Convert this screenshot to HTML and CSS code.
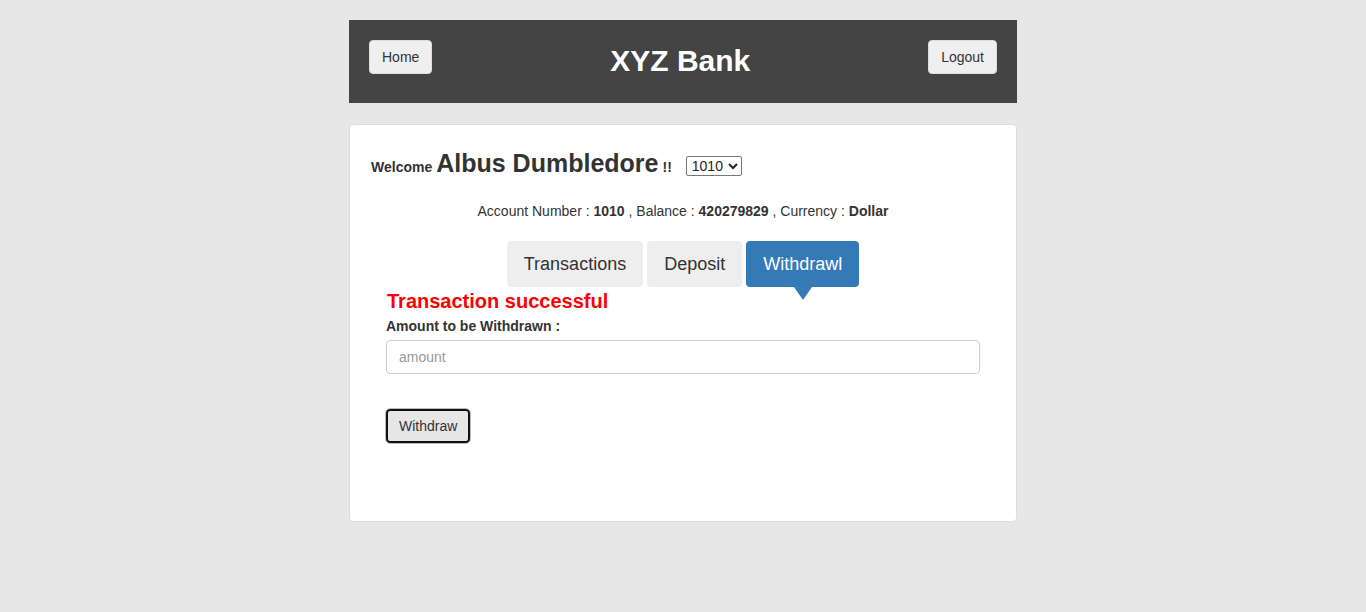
FILE: index.html
```html
<!DOCTYPE html>
<html>
<head>
<meta charset="utf-8">
<link rel="stylesheet" href="styles.css">
</head>
<body>
<div class="wrap">
  <header class="topbar">
    <button class="btn-light">Home</button>
    <h1 class="title">XYZ Bank</h1>
    <button class="btn-light">Logout</button>
  </header>
  <main class="card">
    <div class="welcome">
      <strong class="small">Welcome</strong>
      <span class="name">Albus Dumbledore</span>
      <strong class="small">!!</strong>
      <select class="acc"><option>1010</option></select>
    </div>
    <div class="info">Account Number : <strong>1010</strong> , Balance : <strong>420279829</strong> , Currency : <strong>Dollar</strong></div>
    <nav class="tabs">
      <button class="tab">Transactions</button>
      <button class="tab">Deposit</button>
      <button class="tab active">Withdrawl</button>
    </nav>
    <div class="form">
      <div class="msg">Transaction successful</div>
      <label class="lbl">Amount to be Withdrawn :</label>
      <input class="inp" type="text" placeholder="amount">
      <button class="submit">Withdraw</button>
    </div>
  </main>
</div>
</body>
</html>
```
FILE: styles.css
```css
html, body { margin: 0; padding: 0; }
body {
  background: #e7e7e7;
  font-family: "Liberation Sans", Arial, sans-serif;
  color: #333;
  font-size: 14px;
}
.wrap { width: 668px; margin: 0 auto; padding-top: 20px; }
.topbar {
  background: #444;
  height: 83px;
  display: flex;
  align-items: flex-start;
  justify-content: space-between;
  padding: 20px 20px 0;
  box-sizing: border-box;
}
.btn-light {
  background: #efefef;
  border: 1px solid #ddd;
  border-radius: 4px;
  height: 34px;
  padding: 0 12px;
  font-family: inherit;
  font-size: 14px;
  color: #333;
}
.title {
  margin: 4px 0 0;
  color: #fff;
  font-size: 30px;
  font-weight: bold;
  line-height: 34px;
}
.card {
  margin-top: 21px;
  background: #fff;
  border: 1px solid #ddd;
  border-radius: 4px;
  height: 398px;
  box-sizing: border-box;
  padding: 24px 0 0;
}
.welcome {
  display: flex;
  align-items: baseline;
  padding-left: 21px;
  height: 32px;
}
.small { font-size: 14px; font-weight: bold; }
.name { font-size: 25px; font-weight: bold; margin: 0 4px; }
.acc {
  margin-left: 14px;
  font-family: inherit;
  font-size: 14px;
  height: 20px;
  width: 56px;
  color: #222;
  border: 1px solid #767676;
  border-radius: 2px;
  background: #fff;
  padding: 0 1px;
  align-self: center;
  position: relative;
  top: 1px;
}
.info {
  text-align: center;
  margin-top: 20px;
  line-height: 20px;
}
.tabs {
  display: flex;
  justify-content: center;
  gap: 4px;
  margin-top: 20px;
}
.tab {
  height: 46px;
  padding: 0 17px;
  border: none;
  border-radius: 4px;
  background: #eee;
  color: #333;
  font-family: inherit;
  font-size: 18px;
  position: relative;
}
.tab.active { background: #337ab7; color: #fff; }
.tab.active::after {
  content: "";
  position: absolute;
  left: 50%;
  bottom: -13px;
  margin-left: -9px;
  border-left: 9px solid transparent;
  border-right: 9px solid transparent;
  border-top: 13px solid #337ab7;
}
.form {
  padding: 2px 36px 0;
  display: flex;
  flex-direction: column;
  align-items: flex-start;
}
.msg {
  color: #f00;
  font-size: 20px;
  font-weight: bold;
  line-height: 24px;
  margin-left: 1px;
}
.lbl { font-weight: bold; font-size: 14px; margin-top: 4px; line-height: 18px; }
.inp {
  margin-top: 5px;
  width: 100%;
  height: 34px;
  box-sizing: border-box;
  border: 1px solid #ccc;
  border-radius: 4px;
  padding: 0 12px;
  font-family: inherit;
  font-size: 14px;
}
.inp::placeholder { color: #999; }
.submit {
  margin-top: 35px;
  height: 34px;
  padding: 0 11px;
  background: #e6e6e6;
  border: 2px solid #111;
  outline: 1px solid #bbb;
  border-radius: 4px;
  font-family: inherit;
  font-size: 14px;
  color: #333;
}
```
